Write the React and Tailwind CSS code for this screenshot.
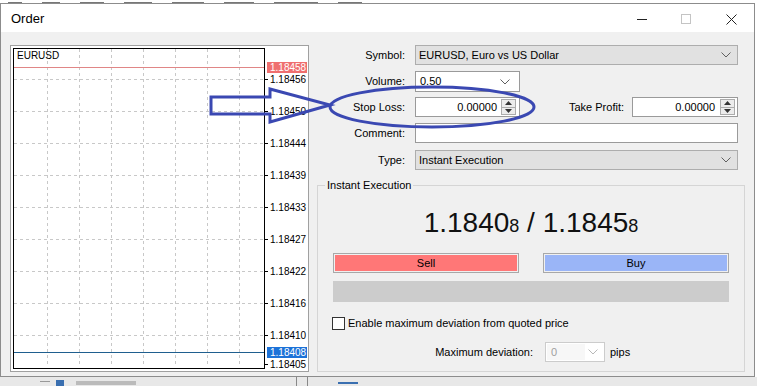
import React from "react";

const Chevron = ({ color = "#606060" }) => (
  <svg width="10" height="6" viewBox="0 0 10 6">
    <path d="M0.5 0.5 L5 5 L9.5 0.5" stroke={color} strokeWidth="1" fill="none" />
  </svg>
);

const Spinner = () => (
  <div className="flex flex-col w-[15px] h-[16px] border border-[#acacac] bg-[#ececec]">
    <div className="flex-1 flex items-center justify-center border-b border-[#acacac]">
      <svg width="7" height="4" viewBox="0 0 7 4"><path d="M0 4 L3.5 0 L7 4 Z" fill="#333" /></svg>
    </div>
    <div className="flex-1 flex items-center justify-center">
      <svg width="7" height="4" viewBox="0 0 7 4"><path d="M0 0 L3.5 4 L7 0 Z" fill="#333" /></svg>
    </div>
  </div>
);

const gridY = [33, 65, 97, 129, 161, 193, 225, 257, 289];
const gridX = [36, 68, 100, 132, 164, 196, 228];
const labels = [
  ["1.18456", 33],
  ["1.18450", 65],
  ["1.18444", 97],
  ["1.18439", 129],
  ["1.18433", 161],
  ["1.18427", 193],
  ["1.18422", 225],
  ["1.18416", 257],
  ["1.18410", 289],
  ["1.18405", 318],
];

function Chart() {
  return (
    <div className="relative w-[299px] h-[327px] border border-[#a0a0a0] bg-white shrink-0">
      <svg className="absolute left-0 top-0" width="297" height="325">
        {gridX.map((x) => (
          <line key={"v" + x} x1={x + 0.5} y1="3" x2={x + 0.5} y2="321" stroke="#c8c8c8" strokeDasharray="3 3" />
        ))}
        {gridY.map((y) => (
          <line key={"h" + y} x1="3" y1={y + 0.5} x2="253" y2={y + 0.5} stroke="#c8c8c8" strokeDasharray="3 3" />
        ))}
        <line x1="3" y1="21.5" x2="253" y2="21.5" stroke="#e08686" />
        <line x1="3" y1="306.5" x2="253" y2="306.5" stroke="#1f5f8f" />
        {gridY.concat([318]).map((y) => (
          <line key={"t" + y} x1="253" y1={y + 0.5} x2="257" y2={y + 0.5} stroke="#000" />
        ))}
      </svg>
      <div className="absolute left-[2px] top-[2px] w-[252px] h-[321px] border border-black">
        <div className="pl-[3px] pt-[1px] text-[10px] leading-[12px]">EURUSD</div>
      </div>
      {labels.map(([v, y]) => (
        <div
          key={v}
          className="absolute left-[257px] h-[11px] leading-[11px] text-[10px] pl-[2px]"
          style={{ top: y - 5 }}
        >
          {v}
        </div>
      ))}
      <div className="absolute left-[256px] top-[16px] w-[40px] h-[11px] leading-[11px] text-[10px] pl-[3px] bg-[#ef6f6f] text-white">
        1.18458
      </div>
      <div className="absolute left-[256px] top-[301px] w-[40px] h-[11px] leading-[11px] text-[10px] pl-[3px] bg-[#1c72d8] text-white">
        1.18408
      </div>
    </div>
  );
}

function Label({ children, w = "w-[88px]" }) {
  return <div className={`${w} text-right shrink-0`}>{children}</div>;
}

export default function App() {
  return (
    <div className="relative w-[757px] h-[386px] overflow-hidden bg-white text-[11px] text-black font-['Liberation_Sans',Arial,sans-serif]">
      {/* edge of the window behind */}
      <div className="h-[3px] bg-white flex items-end gap-[20px] pl-[8px]">
        <div className="w-[14px] h-[1px] bg-[#777]" />
        <div className="w-[18px] h-[1px] bg-[#777]" />
        <div className="w-[24px] h-[1px] bg-[#777]" />
        <div className="w-[28px] h-[1px] bg-[#777]" />
        <div className="w-[32px] h-[1px] bg-[#777]" />
        <div className="w-[30px] h-[1px] bg-[#777]" />
        <div className="w-[44px] h-[1px] bg-[#777]" />
        <div className="w-[24px] h-[1px] bg-[#777]" />
      </div>

      <div className="w-[755px] h-[374px] flex flex-col border border-[#8c8c8c] bg-[#f0f0f0]">
        {/* title bar */}
        <div className="h-[28px] shrink-0 bg-white flex items-center">
          <div className="pl-[10px] text-[13px] leading-[14px] pt-[2px]">Order</div>
          <div className="ml-auto flex items-center pr-[17px]">
            <svg width="10" height="10" viewBox="0 0 10 10" className="mt-[2px]">
              <line x1="0" y1="5.5" x2="10" y2="5.5" stroke="#222" />
            </svg>
            <svg width="10" height="10" viewBox="0 0 10 10" className="ml-[34px] mt-[2px]">
              <rect x="0.5" y="0.5" width="9" height="9" fill="none" stroke="#c4c4c4" />
            </svg>
            <svg width="11" height="11" viewBox="0 0 11 11" className="ml-[35px] mt-[2px]">
              <path d="M0.5 0.5 L10.5 10.5 M10.5 0.5 L0.5 10.5" stroke="#222" />
            </svg>
          </div>
        </div>

        {/* body */}
        <div className="flex-1 flex pt-[13px] pl-[9px]">
          <Chart />

          <div className="ml-[8px] w-[428px] flex flex-col">
            {/* Symbol */}
            <div className="flex items-center h-[20px]">
              <Label>Symbol:</Label>
              <div className="ml-[10px] w-[323px] h-[20px] border border-[#adadad] bg-[#e1e1e1] flex items-center pl-[3px] pr-[6px]">
                <span>EURUSD, Euro vs US Dollar</span>
                <span className="ml-auto"><Chevron /></span>
              </div>
            </div>
            {/* Volume */}
            <div className="flex items-center h-[21px] mt-[6px]">
              <Label>Volume:</Label>
              <div className="ml-[10px] w-[105px] h-[21px] border border-[#9a9a9a] bg-white flex items-center pl-[4px] pr-[9px]">
                <span className="underline">0.50</span>
                <span className="ml-auto"><Chevron /></span>
              </div>
            </div>
            {/* Stop loss / take profit */}
            <div className="flex items-center h-[20px] mt-[5px]">
              <Label>Stop Loss:</Label>
              <div className="ml-[10px] w-[105px] h-[20px] border border-[#9a9a9a] bg-white flex items-center justify-end pr-[3px]">
                <span className="mr-[4px]">0.00000</span>
                <Spinner />
              </div>
              <Label w="w-[104px]">Take Profit:</Label>
              <div className="ml-[8px] w-[106px] h-[20px] border border-[#9a9a9a] bg-white flex items-center justify-end pr-[2px]">
                <span className="mr-[5px]">0.00000</span>
                <Spinner />
              </div>
            </div>
            {/* Comment */}
            <div className="flex items-center h-[20px] mt-[6px]">
              <Label>Comment:</Label>
              <div className="ml-[10px] w-[323px] h-[20px] border border-[#9a9a9a] bg-white" />
            </div>
            {/* Type */}
            <div className="flex items-center h-[20px] mt-[7px]">
              <Label>Type:</Label>
              <div className="ml-[10px] w-[323px] h-[20px] border border-[#adadad] bg-[#e1e1e1] flex items-center pl-[3px] pr-[6px]">
                <span>Instant Execution</span>
                <span className="ml-auto"><Chevron /></span>
              </div>
            </div>

            {/* group box */}
            <div className="relative mt-[15px] w-[428px] h-[187px] border border-[#d5d5d5]">
              <div className="absolute -top-[7px] left-[7px] bg-[#f0f0f0] px-[2px] leading-[12px]">
                Instant Execution
              </div>
              <div className="flex flex-col px-[15px]">
                <div className="mt-[21px] h-[32px] leading-[32px] text-center text-[28px] text-[#111]">
                  1.1840<span className="text-[18px]">8</span> / 1.1845<span className="text-[18px]">8</span>
                </div>
                <div className="mt-[14px] flex justify-between">
                  <div className="w-[186px] h-[20px] border border-[#a8a8a8] p-[1px]">
                    <div className="h-full bg-[#ff7777] flex items-center justify-center">Sell</div>
                  </div>
                  <div className="w-[186px] h-[20px] border border-[#a8a8a8] p-[1px]">
                    <div className="h-full bg-[#9ab5f7] flex items-center justify-center">Buy</div>
                  </div>
                </div>
                <div className="mt-[8px] h-[21px] bg-[#cccccc]" />
                <div className="mt-[15px] flex items-center h-[13px] -ml-[1px]">
                  <div className="w-[13px] h-[13px] border border-[#333] bg-white" />
                  <span className="ml-[3px]">Enable maximum deviation from quoted price</span>
                </div>
                <div className="mt-[12px] flex items-center h-[20px]">
                  <div className="w-[200px] text-right">Maximum deviation:</div>
                  <div className="ml-[12px] w-[60px] h-[20px] border border-[#cccccc] bg-white flex items-center p-[1px]">
                    <div className="w-[38px] h-full bg-[#f7f7f7] pl-[4px] flex items-center text-[#a0a0a0]">0</div>
                    <span className="ml-auto mr-[5px]"><Chevron color="#b8b8b8" /></span>
                  </div>
                  <span className="ml-[5px]">pips</span>
                </div>
              </div>
            </div>
          </div>
        </div>
      </div>

      {/* background below the dialog */}
      <div className="h-[9px] bg-[#e8e8e8] flex items-start overflow-hidden">
        <div className="ml-[40px] mt-[4px] w-[10px] h-[1px] bg-[#999]" />
        <div className="ml-[6px] mt-[3px] w-[8px] h-[6px] bg-[#3a6fb0]" />
        <div className="ml-[12px] mt-[4px] w-[60px] h-[4px] bg-[#bbb]" />
        <div className="ml-[160px] w-[1px] h-full bg-[#888]" />
        <div className="ml-[10px] w-[1px] h-full bg-[#888]" />
        <div className="ml-[30px] mt-[5px] w-[20px] h-[2px] bg-[#3a6fb0]" />
      </div>

      {/* annotation overlay: arrow and ellipse */}
      <svg className="absolute left-0 top-0 pointer-events-none" width="757" height="386">
        <path
          d="M211 97 L270 97 L270 89 L330 105 L270 122 L270 114 L211 114 Z"
          fill="none"
          stroke="#3a48b2"
          strokeWidth="3"
          strokeLinejoin="miter"
        />
        <ellipse cx="432" cy="107" rx="102" ry="20" fill="none" stroke="#3a48b2" strokeWidth="3" />
      </svg>
    </div>
  );
}
